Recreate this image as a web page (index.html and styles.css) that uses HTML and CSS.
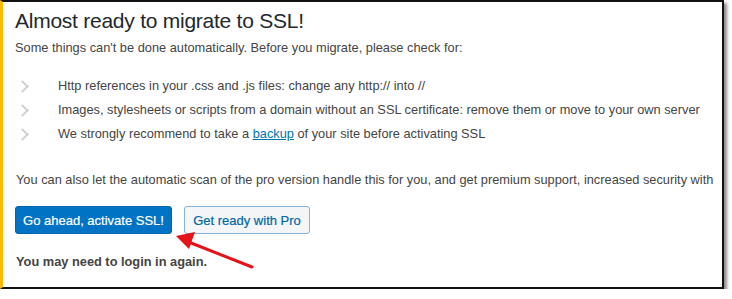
FILE: index.html
```html
<!DOCTYPE html>
<html lang="en">
<head>
<meta charset="utf-8">
<title>Almost ready to migrate to SSL!</title>
<link rel="stylesheet" href="styles.css">
</head>
<body>
<div class="frame">
  <h1 class="title">Almost ready to migrate to SSL!</h1>
  <p class="intro">Some things can't be done automatically. Before you migrate, please check for:</p>
  <ul class="checks">
    <li><span class="chev"></span><span class="item-text">Http references in your .css and .js files: change any http:// into //</span></li>
    <li><span class="chev"></span><span class="item-text">Images, stylesheets or scripts from a domain without an SSL certificate: remove them or move to your own server</span></li>
    <li><span class="chev"></span><span class="item-text">We strongly recommend to take a <a href="#" class="link">backup</a> of your site before activating SSL</span></li>
  </ul>
  <p class="pro">You can also let the automatic scan of the pro version handle this for you, and get premium support, increased security with</p>
  <div class="actions">
    <button class="btn btn-primary">Go ahead, activate SSL!</button>
    <button class="btn btn-secondary">Get ready with Pro</button>
  </div>
  <p class="note">You may need to login in again.</p>
  <svg class="arrow" width="90" height="45" viewBox="0 0 90 45">
    <line x1="84" y1="38" x2="18" y2="12" stroke="#e5141b" stroke-width="3" stroke-linecap="round"/>
    <polygon points="8,7 27,3 21,20" fill="#e5141b"/>
  </svg>
</div>
</body>
</html>
```
FILE: styles.css
```css
html, body {
  margin: 0;
  padding: 0;
  background: #ffffff;
}
body {
  font-family: "Liberation Sans", Arial, sans-serif;
  color: #444;
}
.frame {
  position: relative;
  box-sizing: border-box;
  width: 724px;
  height: 289px;
  border: 2px solid #111;
  border-left: 3px solid #ffb900;
  background: #fff;
  box-shadow: 3px 3px 3px rgba(0, 0, 0, 0.45);
  padding: 6px 0 0 12px;
  overflow: hidden;
}
.title {
  margin: 0;
  font-size: 21px;
  letter-spacing: -0.25px;
  line-height: 26px;
  font-weight: 400;
  color: #23282d;
}
.intro {
  margin: 4px 0 0;
  font-size: 12.8px;
  line-height: 20px;
}
.checks {
  list-style: none;
  margin: 16px 0 0;
  padding: 0;
}
.checks li {
  display: flex;
  align-items: center;
  font-size: 12.8px;
  line-height: 24px;
  white-space: nowrap;
}
.chev {
  flex: none;
  width: 7px;
  height: 7px;
  border-top: 2.5px solid #cfcfcf;
  border-right: 2.5px solid #cfcfcf;
  transform: rotate(45deg);
  margin: 0 31px 0 3px;
}
.link {
  color: #0073aa;
  text-decoration: underline;
}
.pro {
  margin: 24px 0 0;
  font-size: 12.8px;
  line-height: 20px;
  white-space: nowrap;
  padding-left: 1px;
}
.actions {
  display: flex;
  gap: 12px;
  margin-top: 16px;
}
.btn {
  font-family: "Liberation Sans", Arial, sans-serif;
  font-size: 13px;
  height: 28px;
  padding: 0;
  border-radius: 3px;
  border: 1px solid;
  white-space: nowrap;
  text-align: center;
  cursor: pointer;
  -webkit-text-stroke: 0.2px;
}
.btn-primary {
  width: 157px;
  background: #0073c4;
  border-color: #0066b0;
  color: #fff;
}
.btn-secondary {
  width: 126px;
  background: #f3f5f6;
  border-color: #80b4dc;
  color: #0068a8;
}
.note {
  margin: 18px 0 0;
  font-size: 12.8px;
  line-height: 20px;
  font-weight: 700;
  padding-left: 1px;
}
.arrow {
  position: absolute;
  left: 165px;
  top: 227px;
}
```
